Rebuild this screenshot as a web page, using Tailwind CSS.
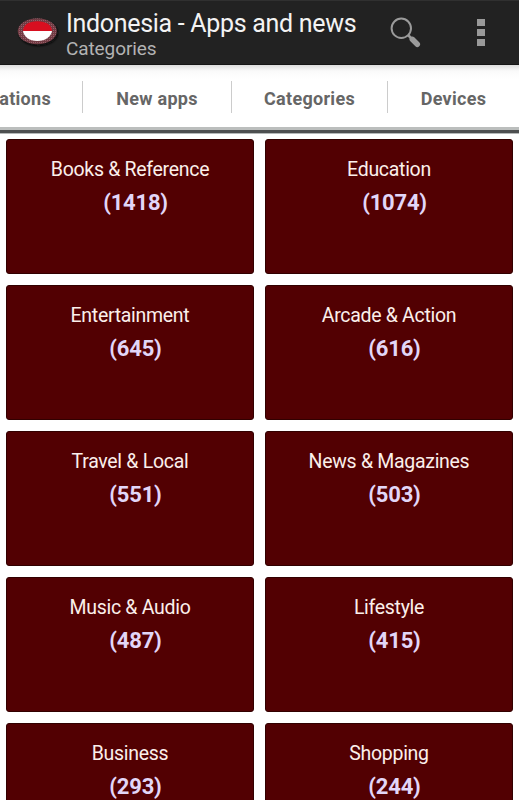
<!DOCTYPE html>
<html lang="en">
<head>
<meta charset="utf-8">
<title>Indonesia - Apps and news</title>
<script src="https://cdn.jsdelivr.net/npm/@tailwindcss/browser@4"></script>
</head>
<body class="bg-white font-[Roboto,sans-serif]">
<div class="w-[519px] h-[800px] overflow-hidden flex flex-col">
  <header class="h-[65px] shrink-0 bg-[#222222] border-t border-[#303030] border-b border-b-[#151515] flex pl-[17px]">
    <svg class="w-[42px] h-[32px] mt-[15px] shrink-0" viewBox="0 0 42 32">
      <defs>
        <pattern id="mesh" width="2" height="2" patternUnits="userSpaceOnUse"><rect width="2" height="2" fill="#713b43"/><rect width="1" height="1" fill="#95606a"/></pattern>
        <filter id="soft"><feGaussianBlur stdDeviation="1"/></filter>
      </defs>
      <ellipse cx="21.5" cy="17" rx="19.5" ry="13" fill="#080808" filter="url(#soft)"/>
      <ellipse cx="20.3" cy="15.2" rx="19.5" ry="13" fill="url(#mesh)"/>
      <path d="M6 15C6 9 12 5.300 20.300 5.300S35 9 35 15Z" fill="#d80f20"/>
      <path d="M6 15H35C34 21 28 25 20.300 25S7 21 6 15Z" fill="#fff"/>
    </svg>
    <div class="ml-[7px] w-[310px] shrink-0 whitespace-nowrap">
      <div class="mt-[7px] text-[25px] leading-[31px] tracking-[-0.3px] text-[#f3f3f3]">Indonesia - Apps and news</div>
      <div class="-mt-px text-[19px] leading-[22px] tracking-[-0.1px] text-[#b3b3b3]">Categories</div>
    </div>
    <svg class="w-[32px] h-[32px] ml-[14px] mt-[16px] shrink-0" viewBox="0 0 32 32">
      <circle cx="11.300" cy="11.300" r="9.700" fill="none" stroke="#9b9b9b" stroke-width="2"/>
      <path d="M18 18L22 22" stroke="#9b9b9b" stroke-width="2.500"/>
      <path d="M22.300 22.300L27.300 27.300" stroke="#9b9b9b" stroke-width="5.500" stroke-linecap="round"/>
    </svg>
    <div class="ml-[55px] mt-[18px] flex flex-col gap-[3px]">
      <i class="w-[8px] h-[7px] bg-[#999]"></i><i class="w-[8px] h-[7px] bg-[#999]"></i><i class="w-[8px] h-[7px] bg-[#999]"></i>
    </div>
  </header>
  <nav class="h-[62px] shrink-0 flex items-start pt-[16px] bg-linear-to-b from-[#dcdcdc] via-[#fafafa] via-[6px] to-white to-[14px] text-[18px] font-bold tracking-[0.3px] text-[#666] leading-[35px]">
    <div class="w-[82px] h-[32px] flex justify-end pr-[31px] whitespace-nowrap">ations</div>
    <div class="w-[149px] h-[32px] border-l border-[#ccc] flex justify-center whitespace-nowrap">New apps</div>
    <div class="w-[156px] h-[32px] border-l border-[#ccc] flex justify-center whitespace-nowrap">Categories</div>
    <div class="w-[132px] h-[32px] border-l border-[#ccc] flex justify-center whitespace-nowrap">Devices</div>
  </nav>
  <div class="h-[7px] shrink-0 bg-[#4d4f50] border-t-3 border-t-[#bbbebd] border-b border-b-[#b5b8b8]"></div>
  <main id="cards" class="grid grid-cols-[248px_248px] auto-rows-[135px] gap-x-[11px] gap-y-[11px] pl-[6px] pt-[5px]"></main>
</div>
<script>
const categories = [["Books & Reference",1418],["Education",1074],["Entertainment",645],["Arcade & Action",616],["Travel & Local",551],["News & Magazines",503],["Music & Audio",487],["Lifestyle",415],["Business",293],["Shopping",244]];
for (const [name, count] of categories) {
  const card = document.createElement("section");
  card.className = "rounded-[3px] bg-[#520002] border border-[#320000] text-center pt-[19px] whitespace-nowrap";
  const label = document.createElement("div");
  label.className = "text-[19.5px] leading-[22px] tracking-[-0.3px] text-[#fbefeb]";
  label.textContent = name;
  const total = document.createElement("div");
  total.className = "mt-[10px] pl-[11px] text-[22px] leading-[24px] tracking-[-0.2px] font-bold text-[#e2d6f8]";
  total.textContent = `(${count})`;
  card.append(label, total);
  document.getElementById("cards").append(card);
}
</script>
</body>
</html>
